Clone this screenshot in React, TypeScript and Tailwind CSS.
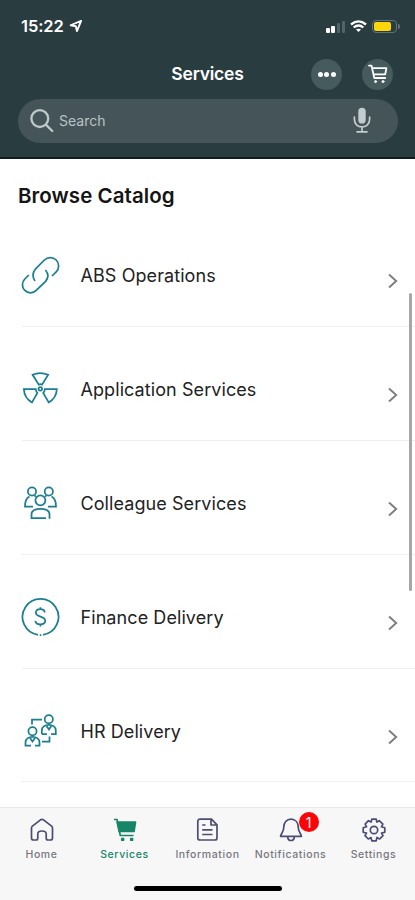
import type { ReactNode } from 'react';

function LinkIcon() {
  return (
    <>
      <path d="M32 21L36.2 16.8A8 8 0 0 0 24.4 5L15.6 13.8Q10.8 20 15 26" />
      <path d="M8.8 20L4.8 24A7.9 7.9 0 0 0 16.2 35.4L25.6 26.4Q30.2 20.4 25.4 15" />
    </>
  );
}

function FanIcon() {
  return (
    <>
      <path d="M12.6 5.8Q20 2.6 28.2 5.8L22 15.6Q20.4 14.8 18.8 15.6Z" />
      <path d="M3.9 20.2H15.8Q16 22.6 17.4 24L12 33.4Q4.3 29 3.9 20.2Z" />
      <path d="M36.8 20.2H24.8Q24.6 22.6 23.2 24L28.7 33.4Q36.4 29 36.8 20.2Z" />
      <circle cx="20.3" cy="19.8" r="1.8" />
    </>
  );
}

function PeopleIcon() {
  return (
    <>
      <circle cx="12" cy="8.5" r="4.1" />
      <circle cx="28.8" cy="8.5" r="4.1" />
      <circle cx="20.4" cy="17.3" r="5" />
      <path d="M9.5 13.5C6.5 15 5 18 5 23.5H13" />
      <path d="M31.5 13.5C34.5 15 36 18 36 23.5H28" />
      <path d="M14.5 12.5L16 13.6M26.4 12.5L25 13.6" />
      <path d="M26 35H11.5V31C11.5 24 29.5 24 29.5 31V35.8" />
    </>
  );
}

function DollarIcon() {
  return (
    <>
      <path d="M18 37.8A18 18 0 1 1 23 37.8M19.7 38H21.3" />
      <path d="M24.8 15.5C24.2 10.8 15.8 11.2 15.9 15.8C16 20.8 25.2 18.3 25.2 23.7C25.2 28.5 15.8 28.6 15.4 23.9M20.4 10.2V12.2M20.4 27.2V29.5" />
    </>
  );
}

function HandoverIcon() {
  return (
    <>
      <circle cx="28.8" cy="8.2" r="4.1" />
      <path d="M21.8 23V19.5C21.8 12 35.8 12 35.8 19.5V23H31M21.8 23H27M26.5 15L29 18.5L31.3 15" />
      <circle cx="12.5" cy="20.3" r="4.1" />
      <path d="M15 34.5H19.5V31.5C19.5 24 5.5 24 5.5 31.5V34.5H11M10 27L12.5 30.5L15 27" />
      <path d="M12 13.5V8.5H22M29.5 25.5V30.5H22" />
    </>
  );
}

function CartOutline() {
  return (
    <svg className="size-[22px]" viewBox="0 0 22 22" fill="none" stroke="white" strokeWidth="1.8" strokeLinecap="round" strokeLinejoin="round">
      <path d="M2 2.6H4.5L7.3 15H18.2M5.2 5.2H19.4L18.2 11.4H6.7" />
      <circle cx="8.6" cy="18.6" r="1" fill="white" strokeWidth="1" />
      <circle cx="16" cy="18.6" r="1" fill="white" strokeWidth="1" />
    </svg>
  );
}

const catalog: { name: string; icon: ReactNode }[] = [
  { name: 'ABS Operations', icon: <LinkIcon /> },
  { name: 'Application Services', icon: <FanIcon /> },
  { name: 'Colleague Services', icon: <PeopleIcon /> },
  { name: 'Finance Delivery', icon: <DollarIcon /> },
  { name: 'HR Delivery', icon: <HandoverIcon /> },
];

const tabs: { name: string; icon: ReactNode; active?: boolean; badge?: number }[] = [
  {
    name: 'Home',
    icon: <path d="M1.5 10.2Q1.5 9 2.4 8.2L10.5 1.8Q12 .8 13.5 1.8L21.6 8.2Q22.5 9 22.5 10.2V20Q22.5 22 20.5 22H18Q16.2 22 16.2 20V16Q16.2 13 12 13Q7.8 13 7.8 16V20Q7.8 22 6 22H3.5Q1.5 22 1.5 20Z" />,
  },
  {
    name: 'Services',
    active: true,
    icon: (
      <>
        <path d="M1 1.5H4L7.3 17.5H20.5" />
        <path d="M4.2 4.2H22.5L21 13.5H6.2Z" fill="currentColor" />
        <rect x="8.8" y="20.5" width="1.7" height="1.7" fill="currentColor" />
        <rect x="17.8" y="20.5" width="1.7" height="1.7" fill="currentColor" />
      </>
    ),
  },
  {
    name: 'Information',
    icon: <path d="M4 1.2H15.5L21 6.8V20Q21 22 19 22H4Q1.8 22 1.8 20V3.5Q1.8 1.2 4 1.2ZM15 1.5V7H20.5M6.2 11.8H16.5M6.2 16.5H16.5M6.2 7H9.5" />,
  },
  {
    name: 'Notifications',
    badge: 1,
    icon: <path d="M12 1.2C7.5 1.2 4.8 4.6 4.8 9C4.8 14.5 1.6 15.8 1.6 18.4H22.4C22.4 15.8 19.2 14.5 19.2 9C19.2 4.6 16.5 1.2 12 1.2ZM8.6 18.6C9 23.8 15 23.8 15.4 18.6" />,
  },
  {
    name: 'Settings',
    icon: (
      <>
        <path d="M9.8 1.2H14.2L14.9 4.1L17.2 2.7L20.9 6.2L19.4 8.8L22.8 9.8V14.2L19.5 15.1L21 17.7L17.7 21L15 19.5L14.2 22.8H9.8L9 19.5L6.3 21L3 17.7L4.5 15.1L1.2 14.2V9.8L4.6 8.8L3.1 6.2L6.5 2.7L9.1 4.1Z" />
        <circle cx="12" cy="12" r="3.7" />
      </>
    ),
  },
];

function StatusBar() {
  return (
    <div className="flex h-[52px] items-center pl-[21px] pr-[15px] text-white">
      <span className="text-[16.5px] font-semibold tracking-[-0.1px]">15:22</span>
      <svg className="ml-[5px] h-[14px] w-[14px]" viewBox="0 0 15 15" fill="none" stroke="white" strokeWidth="2" strokeLinejoin="round">
        <path d="M13 2L1.7 6.7L7.3 7.8L8.5 13Z" />
      </svg>
      <div className="ml-auto flex items-center gap-[5px]">
        <div className="mt-px flex h-3 items-end gap-[1.5px]">
          <span className="h-[5px] w-[4px] rounded-[1px] bg-white" />
          <span className="h-[7px] w-[4px] rounded-[1px] bg-white" />
          <span className="h-[10px] w-[3.5px] rounded-[1px] bg-[#526467]" />
          <span className="h-3 w-[3.5px] rounded-[1px] bg-[#526467]" />
        </div>
        <svg className="h-[13px] w-[17px]" viewBox="0 0 17 13" fill="none" stroke="white" strokeWidth="2.3">
          <path d="M1 4.5Q8.5-1.8 16 4.5M3.7 7.5Q8.5 3.4 13.3 7.5" />
          <path d="M6 9.6Q8.5 7.8 11 9.6L8.5 12Z" fill="white" stroke="none" />
        </svg>
        <div className="flex items-center gap-px">
          <div className="h-[13px] w-[25px] rounded-[4px] border border-[#647376] p-px">
            <div className="h-full w-[17px] rounded-[2px] bg-[#ffd60a]" />
          </div>
          <span className="h-[5px] w-[2px] rounded-r-full bg-[#647376]" />
        </div>
      </div>
    </div>
  );
}

export default function App() {
  return (
    <div className="flex h-[900px] w-[415px] flex-col overflow-hidden bg-white font-['Inter',sans-serif]">
      <header className="h-[159px] shrink-0 border-b-2 border-[#101c20] bg-[#293c40]">
        <StatusBar />
        <div className="grid h-[44px] grid-cols-[1fr_auto_1fr] items-center">
          <h1 className="col-start-2 text-[17.5px] font-semibold tracking-[-0.2px] text-white">Services</h1>
          <div className="flex justify-end gap-5 pr-[22px]">
            <button className="flex size-[31px] items-center justify-center gap-[1.5px] rounded-full bg-[#465b5d]">
              <span className="size-[5px] rounded-full bg-white" />
              <span className="size-[5px] rounded-full bg-white" />
              <span className="size-[5px] rounded-full bg-white" />
            </button>
            <button className="flex size-[31px] items-center justify-center rounded-full bg-[#465b5d]">
              <CartOutline />
            </button>
          </div>
        </div>
        <div className="ml-[18px] mt-[3px] flex h-[44px] w-[380px] items-center rounded-full bg-[#455458] pl-3 pr-[27px]">
          <svg className="size-6" viewBox="0 0 24 24" fill="none" stroke="#bfc9ca" strokeWidth="2.3" strokeLinecap="round">
            <circle cx="9.8" cy="9.6" r="8.4" />
            <path d="M16.1 15.9L22.3 22" />
          </svg>
          <span className="-mt-[2px] ml-[5px] text-[14px] text-[#b8c2c4]">Search</span>
          <svg className="-mt-[2px] ml-auto h-[26px] w-[18px]" viewBox="0 0 18 26" fill="none" stroke="#c4cdce" strokeWidth="1.7" strokeLinecap="round">
            <rect x="5.3" y=".8" width="7.4" height="15.8" rx="3.7" fill="#c4cdce" stroke="none" />
            <path d="M1.4 10V12.5C1.4 22.4 16.6 22.4 16.6 12.5V10M9 20V24.6M4 24.8H14" />
          </svg>
        </div>
      </header>

      <main className="relative h-[648px] shrink-0 overflow-hidden">
        <h2 className="h-[54px] pl-[18px] pt-[22px] text-[20.5px] leading-[30px] font-semibold tracking-[0.06px] text-[#151515]">Browse Catalog</h2>
        <ul>
          {catalog.map(({ name, icon }) => (
            <li key={name} className="ml-[22px] flex h-[113.9px] items-center border-b border-[#efefef] pt-[13px]">
              <svg className="-ml-[2px] -mt-[2px] size-10 shrink-0" viewBox="0 0 40 40" fill="none" stroke="#1c7e91" strokeWidth="1.75">
                {icon}
              </svg>
              <span className="ml-[20.5px] text-[18px] tracking-[0.08px] text-[#222]">{name}</span>
              <svg className="ml-auto mr-[17px] mt-[10px] h-4 w-[10px]" viewBox="0 0 10 16" fill="none" stroke="#7d7d7d" strokeWidth="1.9">
                <path d="M1 1.5L8.2 8L1 14.5" />
              </svg>
            </li>
          ))}
        </ul>
        <div className="absolute right-[3px] top-[134px] h-[298px] w-[3px] rounded-full bg-[#a7a7a7]" />
      </main>

      <nav className="flex h-[93px] shrink-0 flex-col border-t border-[#e9e9e9] bg-[#f7f7f8]">
        <div className="grid grid-cols-5 pt-[10px]">
          {tabs.map(({ name, icon, active, badge }) => (
            <div key={name} className={`flex flex-col items-center ${active ? 'text-[#168568]' : 'text-[#4c4d72]'}`}>
              <div className="relative">
                <svg className="size-6" viewBox="0 0 24 24" fill="none" stroke="currentColor" strokeWidth="1.7" strokeLinejoin="round">
                  {icon}
                </svg>
                {badge && (
                  <span className="absolute -top-[6px] left-[20px] flex size-5 items-center justify-center rounded-full bg-[#fb0508] text-[14px] text-white">
                    {badge}
                  </span>
                )}
              </div>
              <span className={`mt-[6px] text-[10.5px] leading-[14px] font-medium tracking-[0.6px] ${active ? 'text-[#168568]' : 'text-[#77777f]'}`}>
                {name}
              </span>
            </div>
          ))}
        </div>
        <div className="mx-auto mb-[9px] mt-auto h-[5px] w-[148px] rounded-full bg-black" />
      </nav>
    </div>
  );
}
